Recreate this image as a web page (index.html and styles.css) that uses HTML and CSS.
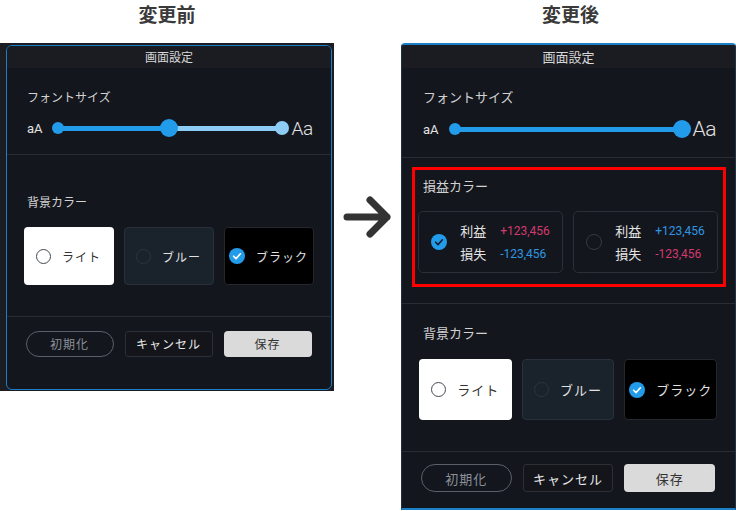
FILE: index.html
```html
<!DOCTYPE html>
<html lang="ja">
<head>
<meta charset="utf-8">
<title>画面設定 変更前・変更後</title>
<link rel="stylesheet" href="styles.css">
</head>
<body>
<div class="page">
  <section class="col col-before">
    <h2 class="heading">変更前</h2>
    <div class="shell-before">
      <div class="frame-before">
        <div class="titlebar tb-before">画面設定</div>
        <div class="sec font-before">
          <div class="label">フォントサイズ</div>
          <div class="size-row sr-before">
            <span class="small-a">aA</span>
            <div class="slider slider-before">
              <span class="dot"></span>
              <span class="bar"></span>
              <span class="thumb"></span>
              <span class="bar bar-rest"></span>
              <span class="dot dot-end"></span>
            </div>
            <span class="big-a ba-before">Aa</span>
          </div>
        </div>
        <div class="sec bg-before">
          <div class="label">背景カラー</div>
          <div class="cards cards-before">
            <div class="card card-light"><span class="radio radio-light"></span><span>ライト</span></div>
            <div class="card card-blue"><span class="radio radio-blue"></span><span>ブルー</span></div>
            <div class="card card-black"><svg class="check" viewBox="0 0 16 16"><circle cx="8" cy="8" r="8" fill="#229bea"/><path d="M4.6 8.2 L7 10.6 L11.4 5.8" fill="none" stroke="#fff" stroke-width="1.6" stroke-linecap="round" stroke-linejoin="round"/></svg><span>ブラック</span></div>
          </div>
        </div>
        <div class="buttons btns-before">
          <button class="btn btn-reset">初期化</button>
          <button class="btn btn-cancel">キャンセル</button>
          <button class="btn btn-save">保存</button>
        </div>
      </div>
    </div>
  </section>

  <div class="arrow-col">
    <svg class="arrow" width="50" height="46" viewBox="0 0 50 46"><path d="M5 22 H45 M28 5 L45 22 L28 39" fill="none" stroke="#333333" stroke-width="7" stroke-linecap="round" stroke-linejoin="round"/></svg>
  </div>

  <section class="col col-after">
    <h2 class="heading heading-after">変更後</h2>
    <div class="shell-after">
      <div class="titlebar tb-after">画面設定</div>
      <div class="sec font-after">
        <div class="label label-after">フォントサイズ</div>
        <div class="size-row sr-after">
          <span class="small-a">aA</span>
          <div class="slider slider-after">
            <span class="dot"></span>
            <span class="bar"></span>
            <span class="thumb"></span>
          </div>
          <span class="big-a ba-after">Aa</span>
        </div>
      </div>
      <div class="sec pnl-sec">
        <div class="highlight">
          <div class="label label-after pnl-label">損益カラー</div>
          <div class="pnl-cards">
            <div class="pnl-card">
              <svg class="check" viewBox="0 0 16 16"><circle cx="8" cy="8" r="8" fill="#229bea"/><path d="M4.6 8.2 L7 10.6 L11.4 5.8" fill="none" stroke="#14202c" stroke-width="1.6" stroke-linecap="round" stroke-linejoin="round"/></svg>
              <div class="pnl-grid">
                <span class="pnl-key">利益</span><span class="num pink">+123,456</span>
                <span class="pnl-key">損失</span><span class="num blue">-123,456</span>
              </div>
            </div>
            <div class="pnl-card">
              <span class="radio radio-dark"></span>
              <div class="pnl-grid">
                <span class="pnl-key">利益</span><span class="num blue">+123,456</span>
                <span class="pnl-key">損失</span><span class="num pink">-123,456</span>
              </div>
            </div>
          </div>
        </div>
      </div>
      <div class="sec bg-after">
        <div class="label label-after">背景カラー</div>
        <div class="cards cards-after">
          <div class="card card-light"><span class="radio radio-light"></span><span>ライト</span></div>
          <div class="card card-blue"><span class="radio radio-blue"></span><span>ブルー</span></div>
          <div class="card card-black"><svg class="check" viewBox="0 0 16 16"><circle cx="8" cy="8" r="8" fill="#229bea"/><path d="M4.6 8.2 L7 10.6 L11.4 5.8" fill="none" stroke="#fff" stroke-width="1.6" stroke-linecap="round" stroke-linejoin="round"/></svg><span>ブラック</span></div>
        </div>
      </div>
      <div class="buttons btns-after">
        <button class="btn btn-reset">初期化</button>
        <button class="btn btn-cancel">キャンセル</button>
        <button class="btn btn-save">保存</button>
      </div>
    </div>
  </section>
</div>
</body>
</html>
```

FILE: styles.css
```css
html, body {
  margin: 0;
  padding: 0;
  background: #ffffff;
}
body {
  width: 736px;
  height: 511px;
  overflow: hidden;
  font-family: "Noto Sans CJK JP", "Noto Sans", sans-serif;
}
.page {
  display: flex;
  align-items: flex-start;
}
.col {
  display: flex;
  flex-direction: column;
}
.col-before { width: 334px; }
.col-after { width: 335px; }

.heading {
  margin: 0;
  height: 43px;
  line-height: 28px;
  font-size: 19px;
  font-weight: 700;
  color: #3a3a3a;
  text-align: center;
}
.heading-after { padding-left: 4px; }

/* ---------- arrow ---------- */
.arrow-col {
  width: 67px;
  padding-top: 195px;
  padding-left: 8px;
  box-sizing: border-box;
}
.arrow { display: block; }

/* ---------- shells ---------- */
.shell-before {
  height: 348px;
  box-sizing: border-box;
  padding: 2px 2px 1px 6px;
  background: #1c1d22;
}
.frame-before {
  height: 100%;
  box-sizing: border-box;
  border: 1.5px solid #1b7ec6;
  border-radius: 6px;
  background: #14161d;
  overflow: hidden;
}
.shell-after {
  height: 467px;
  box-sizing: border-box;
  border-top: 2px solid #1b80c8;
  border-bottom: 2px solid #1b80c8;
  border-left: 1px solid #243142;
  border-right: 1px solid #243142;
  border-radius: 4px 4px 0 0;
  background: #14161d;
  overflow: hidden;
}

.titlebar {
  background: #1b1c21;
  color: #d8d8d8;
  text-align: center;
}
.tb-before { height: 22px; line-height: 22px; font-size: 12px; }
.tb-after { height: 23px; line-height: 23px; font-size: 13px; }

.sec { border-bottom: 1px solid #2a2c33; }

.label {
  font-size: 12px;
  line-height: 18px;
  color: #d2d2d2;
}
.label-after { font-size: 13px; }

/* ---------- font size ---------- */
.font-before { padding: 20px 20px 16px 20px; }
.font-after { padding: 20px 20px 18px 21px; }

.size-row {
  display: flex;
  align-items: center;
  height: 20px;
  color: #e2e2e2;
  font-family: Roboto, "Liberation Sans", sans-serif;
}
.sr-before { margin-top: 12px; }
.sr-after { margin-top: 13px; }
.small-a { font-size: 13px; }
.big-a { letter-spacing: -0.5px; font-weight: 300; }
.ba-before { font-size: 19px; margin-left: 3px; }
.ba-after { font-size: 21px; margin-left: 2px; }

.slider {
  display: flex;
  align-items: center;
  flex-shrink: 0;
}
.slider-before { width: 237px; margin-left: 9px; }
.slider-after { width: 242px; margin-left: 10px; }

.dot {
  width: 12px;
  height: 12px;
  border-radius: 50%;
  background: #229bea;
  flex-shrink: 0;
  z-index: 2;
}
.dot-end {
  width: 14px;
  height: 14px;
  background: #8dcdf5;
}
.bar {
  flex: 1;
  height: 5px;
  margin: 0 -3px;
  background: #229bea;
  z-index: 1;
}
.bar-rest { background: #8dcdf5; }
.thumb {
  width: 18px;
  height: 18px;
  border-radius: 50%;
  background: #229bea;
  flex-shrink: 0;
  z-index: 3;
}

/* ---------- background color ---------- */
.bg-before { padding: 38px 17.5px 31px 16.5px; }
.bg-before .label { padding-left: 3.5px; }
.bg-after { padding: 20px 18px 31px 17px; }
.bg-after .label { padding-left: 4px; }

.cards {
  display: grid;
  grid-template-columns: repeat(3, 1fr);
  gap: 10px;
}
.cards-before { margin-top: 16px; }
.cards-before .card { height: 58px; font-size: 12px; }
.cards-after { margin-top: 17px; }
.cards-after .card { height: 61px; font-size: 13px; }

.card {
  display: flex;
  align-items: center;
  justify-content: center;
  gap: 11px;
  box-sizing: border-box;
  border-radius: 4px;
  color: #e2e2e2;
  letter-spacing: 1px;
}
.card-light {
  background: #ffffff;
  color: #333333;
}
.card-blue {
  background: #1a232c;
  border: 1px solid #29323c;
}
.card-black {
  background: #000000;
  border: 1px solid #25272d;
}

.radio {
  box-sizing: border-box;
  width: 15px;
  height: 15px;
  border-radius: 50%;
  flex-shrink: 0;
}
.radio-light { border: 1.5px solid #444a52; }
.radio-blue { border: 1.5px solid #2b3440; }
.radio-dark {
  width: 16px;
  height: 16px;
  border: 1.5px solid #373a42;
}
.check {
  width: 16px;
  height: 16px;
  flex-shrink: 0;
}

/* ---------- P/L colors ---------- */
.pnl-sec { padding: 9px 9px 16px 10px; }
.highlight {
  border: 3px solid #ff0000;
  padding: 7px 5px 11px 3px;
}
.pnl-label { padding-left: 5px; }
.pnl-cards {
  margin-top: 16px;
  display: grid;
  grid-template-columns: 1fr 1fr;
  gap: 10px;
}
.pnl-card {
  height: 62px;
  box-sizing: border-box;
  border: 1px solid #2c2f37;
  border-radius: 5px;
  display: flex;
  align-items: center;
  justify-content: center;
  gap: 13px;
}
.pnl-grid {
  display: grid;
  grid-template-columns: auto auto;
  column-gap: 14px;
  row-gap: 3px;
  align-items: center;
}
.pnl-key {
  font-size: 13px;
  line-height: 20px;
  color: #e4e4e4;
}
.num {
  font-family: Roboto, "Liberation Sans", sans-serif;
  font-size: 12px;
  line-height: 20px;
}
.pink { color: #d23a6e; }
.blue { color: #2e96e0; }

/* ---------- buttons ---------- */
.buttons {
  display: grid;
  grid-template-columns: repeat(3, 1fr);
  gap: 11px;
}
.btns-before { padding: 13.5px 19.5px 0 18.5px; }
.btns-before .btn { height: 26px; font-size: 12px; }
.btns-after { padding: 12px 20px 0 19px; }
.btns-after .btn { height: 28px; font-size: 13px; }

.btn {
  box-sizing: border-box;
  margin: 0;
  padding: 0;
  font-family: "Noto Sans CJK JP", "Noto Sans", sans-serif;
  letter-spacing: 1px;
}
.btn-reset {
  background: transparent;
  border: 1.5px solid #5a6069;
  border-radius: 14px;
  color: #8a9099;
}
.btn-cancel {
  background: #13151b;
  border: 1px solid #2c2f37;
  border-radius: 3px;
  color: #e8e8e8;
}
.btn-save {
  background: #dadada;
  border: none;
  border-radius: 4px;
  color: #333333;
}
```
